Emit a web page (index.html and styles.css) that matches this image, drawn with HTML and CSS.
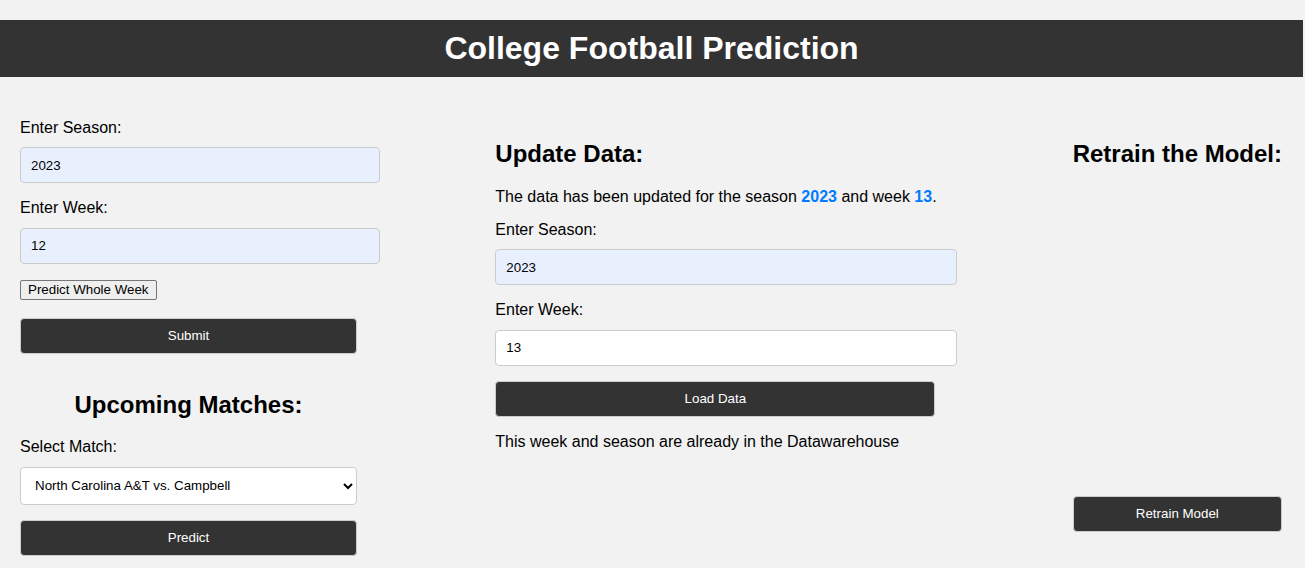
FILE: index.html
```html
<!DOCTYPE html>
<html lang="en">
<head>
<meta charset="utf-8">
<title>College Football Prediction</title>
<link rel="stylesheet" href="styles.css">
</head>
<body>
<div class="page">
  <header class="topbar">
    <h1 class="title">College Football Prediction</h1>
  </header>
  <main class="columns">
    <section class="col col-left">
      <form class="form">
        <label class="label" for="season">Enter Season:</label>
        <input class="field field-fill" id="season" type="text" value="2023">
        <label class="label" for="week">Enter Week:</label>
        <input class="field field-fill" id="week" type="text" value="12">
        <button type="button" class="plain-btn">Predict Whole Week</button>
        <button type="button" class="dark-btn btn-submit">Submit</button>
      </form>
      <h2 class="heading heading-center">Upcoming Matches:</h2>
      <label class="label" for="match">Select Match:</label>
      <select class="select" id="match">
        <option>North Carolina A&amp;T vs. Campbell</option>
      </select>
      <button type="button" class="dark-btn btn-predict">Predict</button>
    </section>

    <section class="col col-mid">
      <h2 class="heading heading-mid">Update Data:</h2>
      <p class="text text-info">The data has been updated for the season <strong class="hl">2023</strong> and week <strong class="hl">13</strong>.</p>
      <label class="label" for="season2">Enter Season:</label>
      <input class="field field-fill field-mid field-mid-first" id="season2" type="text" value="2023">
      <label class="label" for="week2">Enter Week:</label>
      <input class="field field-white field-mid" id="week2" type="text" value="13">
      <button type="button" class="dark-btn btn-load">Load Data</button>
      <p class="text text-status">This week and season are already in the Datawarehouse</p>
    </section>

    <section class="col col-right">
      <h2 class="heading heading-mid">Retrain the Model:</h2>
      <button type="button" class="dark-btn btn-retrain">Retrain Model</button>
    </section>
  </main>
</div>
</body>
</html>
```

FILE: styles.css
```css
html, body {
  margin: 0;
  padding: 0;
  background: #f2f2f2;
}

body {
  font-family: "Liberation Sans", Arial, sans-serif;
  color: #000;
  font-size: 16px;
}

.page {
  width: 1303px;
}

.topbar {
  margin-top: 20px;
  height: 57px;
  box-sizing: border-box;
  padding-top: 10px;
  background: #333333;
}

.title {
  margin: 0;
  font-size: 32px;
  line-height: 37px;
  font-weight: bold;
  color: #ffffff;
  text-align: center;
}

.columns {
  display: flex;
  justify-content: space-between;
  align-items: flex-start;
  padding: 42px 21px 0 20px;
}

.col {
  display: flex;
  flex-direction: column;
  align-items: flex-start;
}

.col-left {
  width: 360px;
}

.col-mid {
  width: 462px;
}

.col-right {
  width: max-content;
}

.form {
  display: flex;
  flex-direction: column;
  align-items: flex-start;
  width: 100%;
}

.label {
  display: block;
  font-size: 16px;
  line-height: 18.4px;
  margin-bottom: 10px;
}

.field {
  box-sizing: border-box;
  width: 360px;
  height: 36px;
  padding: 0 10px;
  border: 1px solid #cccccc;
  border-radius: 4px;
  font-family: "Liberation Sans", Arial, sans-serif;
  font-size: 13.33px;
  color: #000;
  margin: 0 0 16px;
  outline: none;
}

.field-fill {
  background: #e8f0fe;
}

.field-white {
  background: #ffffff;
}

.field-mid {
  width: 462px;
  margin-bottom: 15px;
}

.field-mid-first {
  margin-bottom: 16px;
}

.plain-btn {
  box-sizing: border-box;
  height: 20px;
  padding: 0 7px;
  border: 1px solid #767676;
  border-radius: 2px;
  background: #efefef;
  font-family: "Liberation Sans", Arial, sans-serif;
  font-size: 13.33px;
  color: #000;
  line-height: 16px;
}

.dark-btn {
  display: block;
  box-sizing: border-box;
  height: 36px;
  border: 1px solid #cccccc;
  border-radius: 4px;
  background: #333333;
  color: #ffffff;
  font-family: "Liberation Sans", Arial, sans-serif;
  font-size: 13.33px;
  padding: 0;
}

.btn-submit {
  width: 337px;
  margin-top: 18px;
}

.btn-predict {
  width: 337px;
  margin-top: 15px;
}

.btn-load {
  width: 440px;
  margin-top: 0;
}

.btn-retrain {
  width: 100%;
  margin-top: 308px;
}

.heading {
  font-size: 24px;
  font-weight: bold;
  line-height: 27.6px;
  margin: 20px 0;
}

.heading-center {
  width: 337px;
  text-align: center;
  margin: 37px 0 20px;
}

.heading-mid {
  margin: 21px 0 20px;
}

.text {
  margin: 0;
  font-size: 16px;
  line-height: 18.4px;
}

.text-info {
  margin-bottom: 15px;
}

.text-status {
  margin-top: 16px;
}

.hl {
  color: #007bff;
  font-weight: bold;
}

.select {
  box-sizing: border-box;
  width: 337px;
  height: 38px;
  padding: 0 10px;
  border: 1px solid #cccccc;
  border-radius: 4px;
  background: #ffffff;
  font-family: "Liberation Sans", Arial, sans-serif;
  font-size: 13.33px;
  color: #000;
}
```
